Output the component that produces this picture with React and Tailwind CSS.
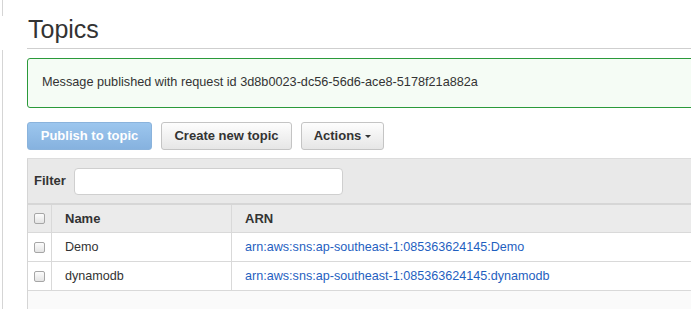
import React from 'react';

const topics = [
  { name: 'Demo', arn: 'arn:aws:sns:ap-southeast-1:085363624145:Demo' },
  { name: 'dynamodb', arn: 'arn:aws:sns:ap-southeast-1:085363624145:dynamodb' },
];

const Checkbox = () => (
  <span className="block w-[11px] h-[11px] rounded-[2px] border border-[#a6a6a6] bg-gradient-to-b from-[#fcfcfc] to-[#e4e4e4]" />
);

const App = () => {
  return (
    <div
      className="w-[691px] h-[309px] overflow-hidden bg-white flex text-[#333]"
      style={{ fontFamily: '"Liberation Sans", Arial, sans-serif' }}
    >
      {/* sidebar edge */}
      <div className="w-[27px] shrink-0 flex flex-col">
        <div className="h-[16px] w-[3px] border-r border-[#d5d5d5]" />
        <div className="h-[34px]" />
        <div className="flex-1 w-[3px] border-r border-[#d5d5d5]" />
      </div>

      <div className="flex-1 min-w-0 flex flex-col">
        <h1 className="h-[49px] pt-[14px] pl-[1px] text-[25px] leading-[30px] font-normal text-[#333] border-b border-[#cfcfcf]">
          Topics
        </h1>

        <div className="mt-[9px] h-[50px] w-[700px] flex items-center pl-[14px] border border-[#2a9a3a] rounded-[3px] bg-[#f5fcf5] text-[12.7px]">
          Message published with request id 3d8b0023-dc56-56d6-ace8-5178f21a882a
        </div>

        <div className="mt-[14px] h-[37px] flex gap-[9px] items-start border-b border-[#dcdcdc]">
          <button className="h-[28px] w-[125px] rounded-[3px] border border-[#8ab3dc] bg-gradient-to-b from-[#9cc6ee] to-[#86b2df] text-white font-bold text-[13px]">
            Publish to topic
          </button>
          <button className="h-[28px] w-[131px] rounded-[3px] border border-[#c4c4c4] bg-gradient-to-b from-[#fdfdfd] to-[#e6e6e6] text-[#333] font-bold text-[13px]">
            Create new topic
          </button>
          <button className="h-[28px] w-[83px] rounded-[3px] border border-[#c4c4c4] bg-gradient-to-b from-[#fdfdfd] to-[#e6e6e6] text-[#333] font-bold text-[13px] flex items-center justify-center gap-[4px]">
            Actions
            <span className="w-0 h-0 border-l-[3px] border-r-[3px] border-t-[3px] border-l-transparent border-r-transparent border-t-[#333] mt-[1px]" />
          </button>
        </div>

        <div className="flex-1 border-l border-[#d5d5d5] bg-[#fafafa]">
          <div className="h-[46px] bg-[#e9e9e9] flex items-center pl-[6px] gap-[8px] border-b-2 border-[#d6d6d6]">
            <span className="font-bold text-[13px]">Filter</span>
            <input className="h-[27px] w-[269px] rounded-[4px] border border-[#cfcfcf] bg-white" />
          </div>

          <div className="h-[28px] flex items-center bg-[#ebebeb] border-b border-[#d9d9d9] text-[13px] font-bold">
            <div className="w-[24px] h-full flex items-center justify-center border-r border-[#d9d9d9]">
              <Checkbox />
            </div>
            <div className="w-[180px] h-full flex items-center pl-[13px] border-r border-[#d9d9d9]">Name</div>
            <div className="flex-1 h-full flex items-center pl-[13px]">ARN</div>
          </div>

          {topics.map((t) => (
            <div key={t.name} className="h-[29px] flex items-center bg-white border-b border-[#d9d9d9] text-[12.6px]">
              <div className="w-[24px] h-full flex items-center justify-center border-r border-[#d9d9d9]">
                <Checkbox />
              </div>
              <div className="w-[180px] h-full flex items-center pl-[13px] border-r border-[#d9d9d9]">{t.name}</div>
              <div className="flex-1 h-full flex items-center pl-[13px] text-[#1f5fbf]">{t.arn}</div>
            </div>
          ))}
        </div>
      </div>
    </div>
  );
};

export default App;
